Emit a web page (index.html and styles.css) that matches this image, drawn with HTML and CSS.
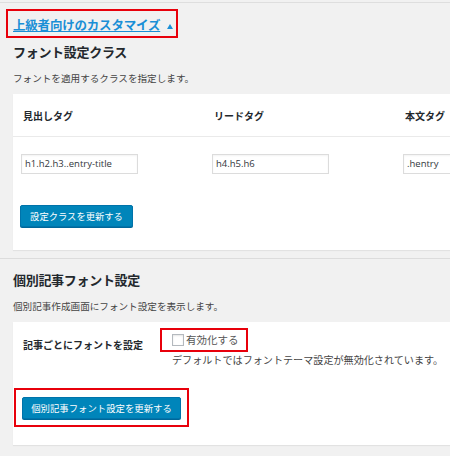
FILE: index.html
```html
<!DOCTYPE html>
<html lang="ja">
<head>
<meta charset="utf-8">
<link rel="stylesheet" href="styles.css">
</head>
<body>
<div class="topline"></div>
<div class="toggle-row">
  <span class="annot annot-link"><a class="adv-link" href="#">上級者向けのカスタマイズ</a><svg class="tri" width="6" height="5" viewBox="0 0 6 5"><path d="M0 5 L3 0 L6 5 Z" fill="#1a8fd6"/></svg></span>
</div>
<h2 class="sec-title">フォント設定クラス</h2>
<p class="sec-desc">フォントを適用するクラスを指定します。</p>
<div class="card card-classes">
  <div class="grid">
    <div class="th">見出しタグ</div>
    <div class="th">リードタグ</div>
    <div class="th">本文タグ</div>
    <div class="td"><input class="text-in" type="text" value="h1.h2.h3..entry-title"></div>
    <div class="td"><input class="text-in" type="text" value="h4.h5.h6"></div>
    <div class="td"><input class="text-in" type="text" value=".hentry"></div>
    <div class="td td-btn"><button class="btn">設定クラスを更新する</button></div>
  </div>
</div>
<div class="divider"></div>
<h2 class="sec-title sec-title-2">個別記事フォント設定</h2>
<p class="sec-desc">個別記事作成画面にフォント設定を表示します。</p>
<div class="card card-post">
  <div class="post-row">
    <div class="post-th">記事ごとにフォントを設定</div>
    <div class="post-td">
      <label class="annot annot-check"><span class="cbox"></span><span class="cb-label">有効化する</span></label>
      <p class="post-note">デフォルトではフォントテーマ設定が無効化されています。</p>
    </div>
  </div>
  <div class="post-btn-row">
    <span class="annot annot-btn"><button class="btn btn-wide">個別記事フォント設定を更新する</button></span>
  </div>
</div>
</body>
</html>
```
FILE: styles.css
```css
html, body {
  margin: 0;
  padding: 0;
}
body {
  background: #f1f1f1;
  width: 450px;
  height: 456px;
  overflow: hidden;
  font-family: "Noto Sans CJK JP", "Noto Sans", sans-serif;
  color: #23282d;
}
.topline {
  margin-top: 2px;
  height: 1px;
  background: #dedede;
}
.toggle-row {
  padding: 6px 0 0 6px;
  height: 29px;
}
.annot {
  display: inline-block;
  border: 2px solid #e8000b;
  box-sizing: border-box;
}
.annot-link {
  height: 29px;
  width: 172px;
  padding: 0 0 0 5px;
  line-height: 25px;
  white-space: nowrap;
}
.adv-link {
  font-size: 12.5px;
  font-weight: bold;
  color: #1a8fd6;
  text-decoration: underline;
  letter-spacing: -0.2px;
}
.tri {
  margin-left: 7px;
  vertical-align: 1px;
}
.sec-title {
  margin: 4px 0 0 13px;
  font-size: 13px;
  line-height: 20px;
  font-weight: bold;
  color: #23282d;
  letter-spacing: -0.3px;
}
.sec-title-2 {
  margin-top: 11px;
}
.sec-desc {
  margin: 8px 0 0 13px;
  font-size: 9.6px;
  line-height: 16px;
  color: #444;
}
.card {
  background: #fff;
  margin-left: 13px;
  box-shadow: 0 1px 1px rgba(0,0,0,0.06);
}
.card-classes {
  margin-top: 8px;
  width: 600px;
  height: 156px;
}
.grid {
  display: grid;
  grid-template-columns: 191px 191px 191px;
  grid-template-rows: 43px 44px 67px;
}
.th {
  border-bottom: 1px solid #eaeaea;
  padding-left: 10px;
  font-size: 10px;
  font-weight: bold;
  line-height: 43px;
}
.td {
  padding: 11px 0 0 8px;
}
.text-in {
  width: 117px;
  height: 20px;
  box-sizing: border-box;
  border: 1px solid #dcdcdc;
  box-shadow: inset 0 1px 2px rgba(0,0,0,0.05);
  padding: 0 3px;
  font-family: "Open Sans", sans-serif;
  font-size: 9.5px;
  color: #32373c;
  outline: none;
}
.td-btn {
  padding: 20px 0 0 7px;
}
.btn {
  height: 22px;
  box-sizing: border-box;
  background: #0085ba;
  border: 1px solid #0073aa;
  border-radius: 2px;
  box-shadow: 0 1px 0 #006799;
  color: #fff;
  font-family: "Noto Sans CJK JP", sans-serif;
  font-size: 9.3px;
  padding: 0;
  line-height: 20px;
  width: 113px;
  text-align: center;
  white-space: nowrap;
}
.divider {
  margin-top: 8px;
  height: 1px;
  background: #dcdcdc;
}
.card-post {
  margin-top: 8px;
  height: 123px;
  box-sizing: border-box;
}
.post-row {
  display: flex;
  padding-top: 6px;
}
.post-th {
  width: 137px;
  padding-left: 10px;
  padding-top: 9px;
  font-size: 10px;
  font-weight: bold;
  line-height: 15px;
}
.annot-check {
  height: 24px;
  width: 88px;
  padding-left: 10px;
  display: flex;
  align-items: center;
}
.cbox {
  width: 12px;
  height: 12px;
  box-sizing: border-box;
  border: 1px solid #b4b9be;
  background: #fff;
  box-shadow: inset 0 1px 2px rgba(0,0,0,0.1);
  margin-right: 2px;
}
.cb-label {
  font-size: 10.5px;
  color: #555;
  line-height: 14px;
}
.post-note {
  margin: 0 0 0 12px;
  font-size: 10.1px;
  line-height: 15px;
  color: #444;
  white-space: nowrap;
}
.post-btn-row {
  display: flex;
  padding: 21px 0 0 1px;
}
.annot-btn {
  display: block;
  padding: 7px 6px 6px 6px;
}
.btn-wide {
  width: 159px;
  display: block;
  font-size: 9.4px;
}
```
